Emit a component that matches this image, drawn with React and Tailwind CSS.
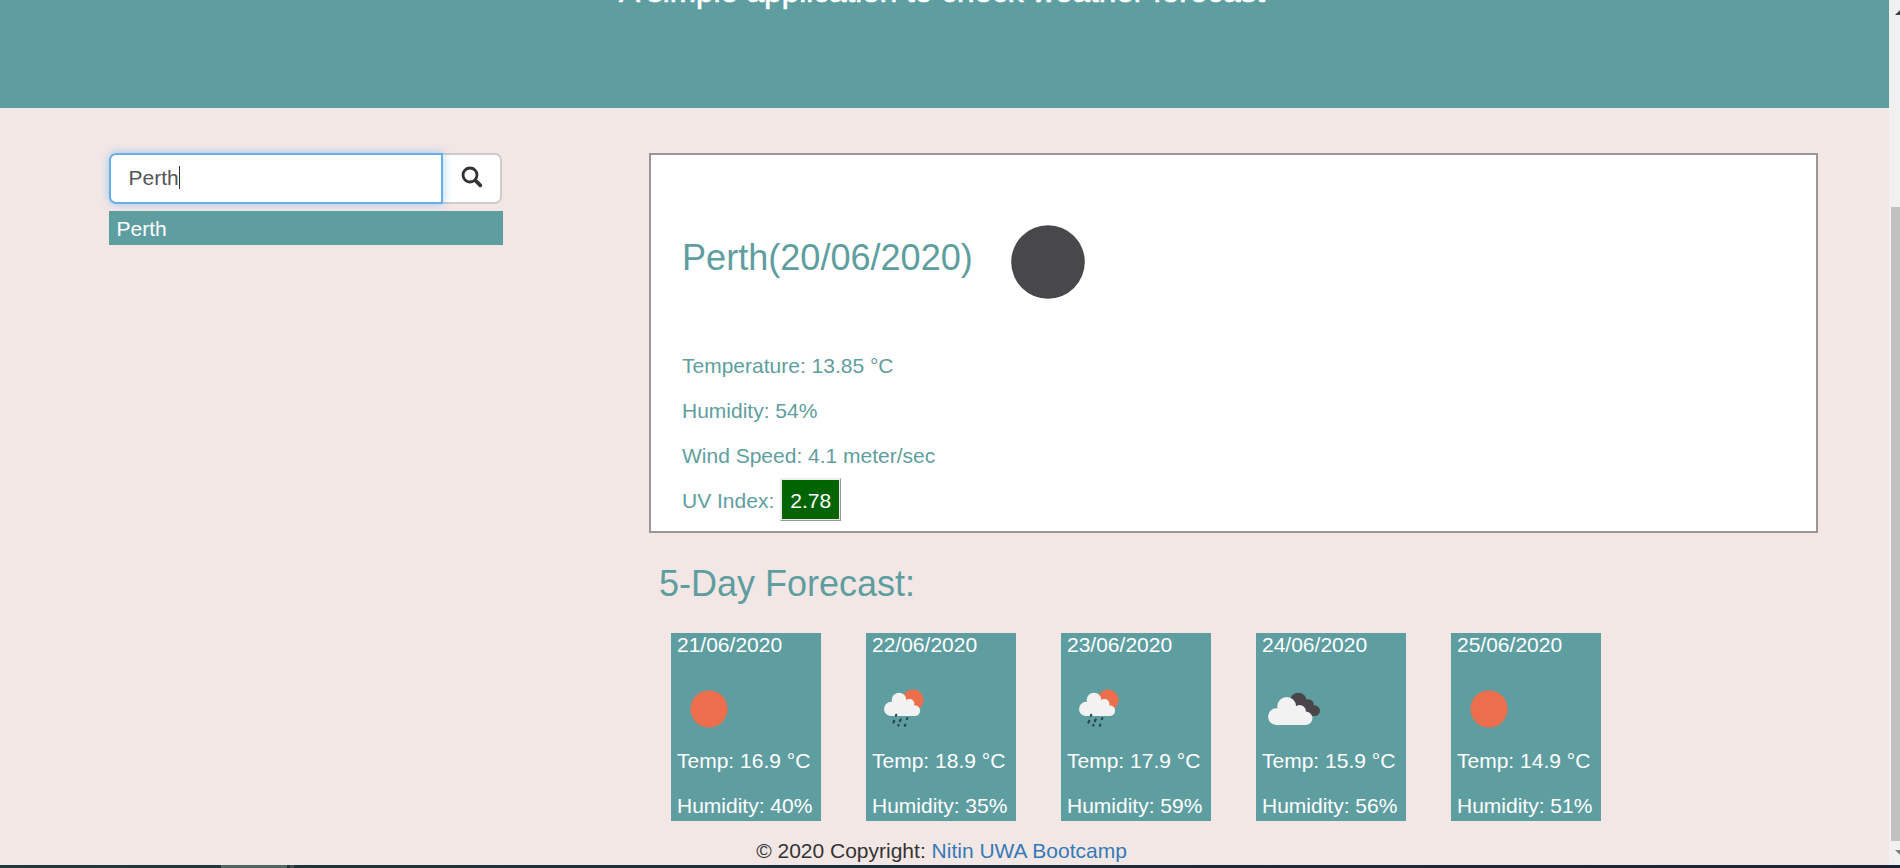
import React from 'react';

const days = [
  { date: '21/06/2020', icon: 'sun', temp: '16.9', humidity: 40 },
  { date: '22/06/2020', icon: 'rain', temp: '18.9', humidity: 35 },
  { date: '23/06/2020', icon: 'rain', temp: '17.9', humidity: 59 },
  { date: '24/06/2020', icon: 'clouds', temp: '15.9', humidity: 56 },
  { date: '25/06/2020', icon: 'sun', temp: '14.9', humidity: 51 },
];

function WeatherIcon({ name }) {
  return (
    <svg viewBox="0 0 62 62" className="block size-[62px]">
      {name === 'sun' && <circle cx="32" cy="31" r="18.600" fill="#ec6e4c" />}
      {name === 'rain' && (
        <>
          <circle cx="41" cy="22" r="10.600" fill="#ec6e4c" />
          <g fill="#f2f2f2">
            <circle cx="27" cy="22" r="7.300" />
            <circle cx="19.100" cy="30.900" r="7.100" />
            <circle cx="37.400" cy="26" r="5" />
            <circle cx="42.700" cy="32.600" r="5.400" />
            <path d="M19 24h18l5 5v9H19z" />
          </g>
          <g stroke="#2b4550" strokeWidth="2.200" strokeLinecap="round">
            <path d="M24.200 36.900l-.3.8M22.200 42.800l-.8 1.800M28.700 41.400l-.8 1.800M35.300 40.200l-.4.900M26.500 46.900l-.3.600M33.300 46.700l-.5 1.100" />
          </g>
        </>
      )}
      {name === 'clouds' && (
        <>
          <g fill="#484649">
            <circle cx="36.300" cy="22.900" r="8.200" />
            <circle cx="46.500" cy="26.600" r="5.300" />
            <circle cx="52.600" cy="32.700" r="5.400" />
            <path d="M36 24h12l4 6v8.100H36z" />
          </g>
          <g fill="#f2f2f2">
            <circle cx="24.700" cy="28.500" r="9.400" />
            <circle cx="14.400" cy="38.600" r="8.400" />
            <circle cx="37.600" cy="33.200" r="6.200" />
            <circle cx="43.700" cy="40.300" r="6.700" />
            <path d="M14.400 31h23l6 5v11H14.400z" />
          </g>
        </>
      )}
    </svg>
  );
}

function DayCard({ day }) {
  return (
    <article className="flex h-[188px] w-[150px] flex-col whitespace-nowrap bg-[#5f9ea0] pl-1.5 text-white">
      <p className="h-[45px] leading-[23px]">{day.date}</p>
      <WeatherIcon name={day.icon} />
      <p className="mt-[9px] h-[25px] leading-[23px]">Temp: {day.temp} °C</p>
      <p className="mt-5 h-[25px] leading-[23px]">Humidity: {day.humidity}%</p>
    </article>
  );
}

export default function App() {
  return (
    <div className="flex h-[868px] w-[1900px] flex-col overflow-hidden bg-[#f3e7e6] font-['Liberation_Sans',Arial,sans-serif] text-[21px] text-[#333]">
      <div className="flex min-h-0 flex-1">
        <div className="flex w-[1889px] flex-col">
          <header className="flex h-[108px] shrink-0 justify-center overflow-hidden bg-[#5f9ea0] pr-[5px] text-white">
            <p className="-mt-[27px] h-9 whitespace-nowrap text-[31.5px] leading-9 [-webkit-text-stroke:0.7px_white]">A simple application to check weather forecast</p>
          </header>
          <main className="flex h-[717px] shrink-0 pl-[109px] pt-[45px]">
            <aside className="w-[394px]">
              <div className="flex h-[51px] w-[393px]">
                <div className="z-10 flex w-[334px] items-center rounded-l-[7px] border-2 border-[#66afe9] bg-white pb-[2px] pl-[17.5px] text-[#555] shadow-[0_0_10px_rgba(102,175,233,0.6)]">
                  <span>Perth</span>
                  <span className="h-[23px] w-px bg-[#333]" />
                </div>
                <button className="flex flex-1 items-center justify-center rounded-r-[7px] border-2 border-l-0 border-[#ccc] bg-white pb-1" aria-label="Search">
                  <svg viewBox="0 0 22 22" className="size-[22px]" fill="none" stroke="#333">
                    <circle cx="9" cy="9" r="7" strokeWidth="2.800" />
                    <path d="M14.500 14.500l4.800 4.800" strokeWidth="3.800" strokeLinecap="round" />
                  </svg>
                </button>
              </div>
              <p className="mt-[7px] h-[34px] bg-[#5f9ea0] pl-[7.5px] leading-[36px] text-white">Perth</p>
            </aside>
            <section className="ml-[146px] w-[1169px]">
              <div className="flex h-[380px] flex-col border-2 border-[#9b9595] bg-white pl-[31px] text-[#5f9ea0]">
                <div className="mt-[42px] flex h-[128px] items-center">
                  <h2 className="mt-[-6px] w-[334px] whitespace-nowrap text-[36.100px] leading-10">Perth(20/06/2020)</h2>
                  <svg viewBox="0 0 74 74" className="-ml-[5px] mt-px size-[74px]"><circle cx="37" cy="37" r="36.800" fill="#484749" /></svg>
                </div>
                <p className="mt-[28px] leading-[25px]">Temperature: 13.85 °C</p>
                <p className="mt-5 leading-[25px]">Humidity: 54%</p>
                <p className="mt-5 leading-[25px]">Wind Speed: 4.1 meter/sec</p>
                <div className="mt-[8px] flex h-[46px] items-center">
                  <span className="pt-[3px]">UV Index:</span>
                  <span className="ml-[6px] flex h-[43px] w-[61px] items-center justify-center border border-t-[#eee] border-l-[#eee] border-b-[#999] border-r-[#999] bg-[#ededed] p-px">
                    <span className="flex h-[39px] w-[57px] items-center justify-center bg-[#006400] pt-[3px] text-white">2.78</span>
                  </span>
                </div>
              </div>
              <h2 className="mt-[31px] ml-2.5 text-[36px] leading-10 text-[#5f9ea0]">5-Day Forecast:</h2>
              <div className="mt-[29px] ml-[22px] flex gap-[45px]">
                {days.map((day) => <DayCard key={day.date} day={day} />)}
              </div>
            </section>
          </main>
          <footer className="flex justify-center whitespace-nowrap pt-[13px] pr-[6px] leading-[26px]">
            <span>© 2020 Copyright: <a className="text-[#337ab7]">Nitin UWA Bootcamp</a></span>
          </footer>
        </div>
        <div className="flex flex-1 flex-col overflow-hidden bg-[#f0f0f0] pl-0.5">
          <svg viewBox="0 0 9 6" className="mt-[10px] ml-[4px] h-[6px] w-[9px] shrink-0"><path d="M0 5L5 0H9V5z" fill="#404040" /></svg>
          <div className="mt-[191px] h-[634px] shrink-0 bg-[#c1c1c1]" />
          <svg viewBox="0 0 9 6" className="mt-[9px] ml-[4px] h-[6px] w-[9px] shrink-0"><path d="M0 0H9V5H5z" fill="#808080" /></svg>
        </div>
      </div>
      <div className="flex h-[3px] shrink-0 bg-gradient-to-r from-[#21373e] to-[#1b2236] pl-[221px]">
        <span className="w-[66px] bg-[#526668]" />
        <span className="ml-[3px] w-[4px] bg-[#454d4e]" />
      </div>
    </div>
  );
}
